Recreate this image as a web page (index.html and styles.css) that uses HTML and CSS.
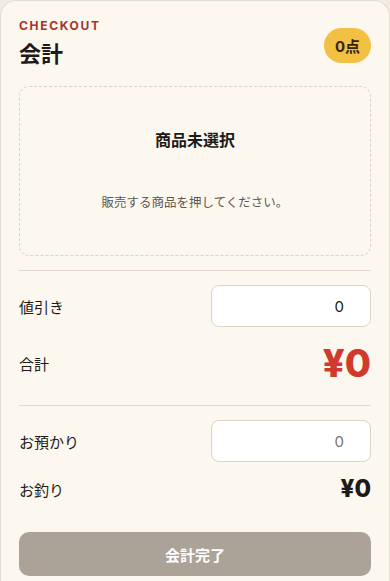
FILE: index.html
```html
<!DOCTYPE html>
<html lang="ja">
<head>
    <meta charset="UTF-8">
    <meta name="viewport" content="width=device-width, initial-scale=1.0">
    <title>会計</title>
    <link rel="stylesheet" href="styles.css">
</head>
<body>
    <section class="checkout">
        <div class="checkout-header">
            <div>
                <p class="eyebrow">CHECKOUT</p>
                <h1>会計</h1>
            </div>
            <span class="count-badge">0点</span>
        </div>

        <div class="empty-cart">
            <p class="empty-title">商品未選択</p>
            <p class="empty-text">販売する商品を押してください。</p>
        </div>

        <hr class="divider">

        <div class="field-row">
            <label for="discount">値引き</label>
            <input type="text" id="discount" value="0">
        </div>
        <div class="total-row">
            <span>合計</span>
            <span class="total-amount">¥0</span>
        </div>

        <hr class="divider divider-total">

        <div class="field-row">
            <label for="received">お預かり</label>
            <input type="text" id="received" placeholder="0">
        </div>
        <div class="change-row">
            <span>お釣り</span>
            <span class="change-amount">¥0</span>
        </div>

        <button type="button" class="finish-button" disabled>会計完了</button>
    </section>
</body>
</html>
```

FILE: styles.css
```css
body {
    margin: 0;
    background: #f1ebe2;
    font-family: "Inter", "Noto Sans CJK JP", sans-serif;
    color: #1d1a17;
}

.checkout {
    background: #fcf7ef;
    border: 1px solid #e6ddd0;
    border-bottom: none;
    border-radius: 16px 16px 0 0;
    padding: 18px 18px 20px;
    min-height: 581px;
    box-sizing: border-box;
}

.checkout-header {
    display: flex;
    justify-content: space-between;
    align-items: center;
}

.eyebrow {
    margin: 0;
    font-size: 12px;
    line-height: 14px;
    font-weight: 700;
    letter-spacing: 0.14em;
    color: #a8322d;
}

h1 {
    margin: 5px 0 0;
    font-family: "Noto Sans CJK JP", sans-serif;
    font-size: 22px;
    line-height: 28px;
    font-weight: 700;
}

.count-badge {
    display: inline-flex;
    align-items: center;
    justify-content: center;
    height: 35px;
    padding: 0 11px;
    border-radius: 18px;
    background: #f2c143;
    font-family: "Inter", "Noto Sans CJK JP", sans-serif;
    font-weight: 700;
    font-size: 15px;
    color: #33250f;
    margin-top: 6px;
}

.empty-cart {
    margin-top: 20px;
    height: 170px;
    box-sizing: border-box;
    border: 1px dashed #ddd2c4;
    border-radius: 10px;
    text-align: center;
    padding-top: 40px;
}

.empty-title {
    margin: 0;
    font-family: "Noto Sans CJK JP", sans-serif;
    font-size: 16px;
    line-height: 24px;
    font-weight: 700;
}

.empty-text {
    margin: 42px 0 0;
    font-family: "Noto Sans CJK JP", sans-serif;
    font-size: 12.5px;
    line-height: 18px;
    color: #5e5852;
}

.divider {
    border: none;
    border-top: 1px solid #e6d8cc;
    margin: 14px 0;
}

.divider-total {
    margin-top: 22px;
}

.field-row,
.total-row,
.change-row {
    display: flex;
    justify-content: space-between;
    align-items: center;
    font-family: "Noto Sans CJK JP", sans-serif;
    font-size: 15px;
}

.field-row input {
    width: 160px;
    height: 42px;
    box-sizing: border-box;
    border: 1px solid #ddd4c8;
    border-radius: 8px;
    background: #fff;
    padding: 0 26px 0 12px;
    text-align: right;
    font-family: "Inter", sans-serif;
    font-size: 15px;
    color: #1d1a17;
}

.field-row input::placeholder {
    color: #7a746e;
}

.total-row {
    margin-top: 16px;
    height: 40px;
}

.total-amount {
    font-family: "Inter", sans-serif;
    font-weight: 800;
    font-size: 38px;
    line-height: 40px;
    color: #cf3a2c;
}

.change-row {
    margin-top: 13px;
    height: 28px;
}

.change-amount {
    font-family: "Inter", sans-serif;
    font-weight: 800;
    font-size: 24px;
    line-height: 28px;
}

.finish-button {
    display: block;
    width: 100%;
    height: 44px;
    margin-top: 29px;
    border: none;
    border-radius: 10px;
    background: #aca398;
    color: #fff;
    font-family: "Noto Sans CJK JP", sans-serif;
    font-weight: 700;
    font-size: 15px;
}
```
